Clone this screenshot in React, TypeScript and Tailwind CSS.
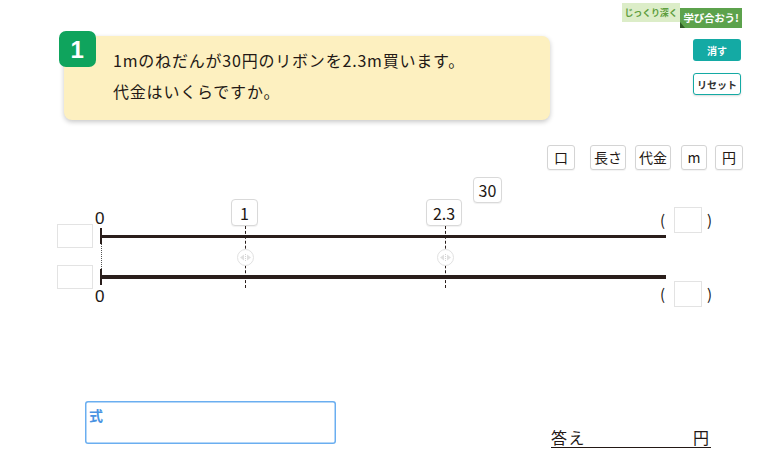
import React from "react";

const jp = { fontFamily: '"Noto Sans CJK JP", "Noto Sans", sans-serif' };

const LabelBox = ({ children, className }: { children: React.ReactNode; className: string }) => (
    <div
        className={`absolute flex items-center justify-center bg-white border border-[#d9d9d9] rounded-[4px] text-[16px] text-[#231815] shadow-[0_1px_1px_rgba(0,0,0,0.06)] ${className}`}
    >
        {children}
    </div>
);

const ToolBox = ({ children, w }: { children: React.ReactNode; w: string }) => (
    <div
        className={`h-[25px] ${w} flex items-center justify-center border border-[#d4d4d4] rounded-[3px] bg-white text-[14px] text-[#231815] shadow-[0_1px_1px_rgba(0,0,0,0.05)]`}
    >
        {children}
    </div>
);

export default function App() {
    return (
        <div className="w-[768px] h-[476px] bg-white overflow-hidden text-[#231815]" style={jp}>
            {/* Header: question card + right controls */}
            <div className="flex h-[145px]">
                <div className="pl-[64px] pt-[36px]">
                    <div className="relative w-[486px] h-[84px] bg-[#fdf0c0] rounded-[8px] shadow-[0_2px_5px_rgba(0,0,0,0.22)] pl-[49px] pt-[9px] text-[16px] leading-[31px] tracking-[0.05em]">
                        <div className="absolute -left-[5px] -top-[5px] w-[37px] h-[36px] rounded-[7px] bg-[#0fa45d] flex items-center justify-center text-white text-[24px] font-bold" style={{ fontFamily: '"Liberation Sans", Arial, sans-serif' }}>
                            1
                        </div>
                        <p>1mのねだんが30円のリボンを2.3m買います。</p>
                        <p>代金はいくらですか。</p>
                    </div>
                </div>

                <div className="ml-auto mr-[26px] pt-[3px] flex flex-col items-end">
                    <div className="flex items-start w-[120px]">
                        <div className="w-[58px] h-[19px] bg-[#dcedc8] text-[#5e9e3e] text-[9px] font-bold tracking-[-0.02em] whitespace-nowrap flex items-center justify-center">
                            じっくり深く
                        </div>
                        <div className="relative mt-[5px] w-[62px] h-[20px] bg-[#5ca24c] text-white text-[10.5px] font-bold tracking-[-0.02em] whitespace-nowrap flex items-center justify-center">
                            学び合おう!
                            <div className="absolute left-0 bottom-0 w-0 h-0 border-l-[5px] border-l-[#2e5b24] border-t-[6px] border-t-transparent" />
                        </div>
                    </div>
                    <button className="mt-[11px] mr-[1px] w-[48px] h-[22px] rounded-[3px] bg-[#14aaa4] text-white text-[10px] font-bold flex items-center justify-center">
                        消す
                    </button>
                    <button className="mt-[12px] mr-[1px] w-[48px] h-[22px] rounded-[3px] border-[1.5px] border-[#14aaa4] bg-white text-[#333] text-[10px] font-bold whitespace-nowrap flex items-center justify-center shadow-[0_1px_2px_rgba(0,0,0,0.15)]">
                        リセット
                    </button>
                </div>
            </div>

            {/* Toolbar */}
            <div className="flex justify-end items-center pr-[25px] h-[25px]">
                <ToolBox w="w-[28px]">口</ToolBox>
                <div className="w-[15px]" />
                <ToolBox w="w-[36px]">長さ</ToolBox>
                <div className="w-[9px]" />
                <ToolBox w="w-[36px]">代金</ToolBox>
                <div className="w-[10px]" />
                <ToolBox w="w-[26px]">m</ToolBox>
                <div className="w-[8px]" />
                <ToolBox w="w-[28px]">円</ToolBox>
            </div>

            {/* Number line diagram */}
            <div className="relative h-[140px]">
                <LabelBox className="left-[473px] top-[7px] w-[29px] h-[26px]">30</LabelBox>
                <LabelBox className="left-[231px] top-[29px] w-[27px] h-[27px]">1</LabelBox>
                <LabelBox className="left-[426px] top-[29px] w-[36px] h-[27px]">2.3</LabelBox>

                {/* zero labels */}
                <div className="absolute left-[95px] top-[40px] text-[17px] leading-none" style={{ fontFamily: '"Liberation Sans", Arial, sans-serif' }}>0</div>
                <div className="absolute left-[95px] top-[118px] text-[17px] leading-none" style={{ fontFamily: '"Liberation Sans", Arial, sans-serif' }}>0</div>

                {/* input boxes left */}
                <div className="absolute left-[57px] top-[54px] w-[36px] h-[24px] border border-[#e3e3e3] bg-white" />
                <div className="absolute left-[57px] top-[95px] w-[36px] h-[24px] border border-[#e3e3e3] bg-white" />

                {/* lines */}
                <div className="absolute left-[101px] top-[65px] w-[565px] h-[3px] bg-[#2a1e1b]" />
                <div className="absolute left-[101px] top-[105px] w-[565px] h-[4px] bg-[#2a1e1b]" />
                <div className="absolute left-[100px] top-[58px] w-[2px] h-[16px] bg-[#2a1e1b]" />
                <div className="absolute left-[100px] top-[99px] w-[2px] h-[16px] bg-[#2a1e1b]" />
                <div className="absolute left-[101px] top-[74px] h-[25px] border-l border-dotted border-[#555]" />

                {/* tick markers */}
                {[245, 445].map((x) => (
                    <React.Fragment key={x}>
                        <div className="absolute top-[56px] h-[62px] border-l border-dashed border-[#2a1e1b]" style={{ left: x }} />
                        <div
                            className="absolute top-[79px] w-[17px] h-[17px] rounded-full border border-[#e2e2e2] bg-white flex items-center justify-center"
                            style={{ left: x - 8 }}
                        >
                            <svg width="11" height="7" viewBox="0 0 11 7">
                                <path d="M0 3.5 L4 0.5 L4 6.5 Z" fill="#e0e0e0" />
                                <path d="M11 3.5 L7 0.5 L7 6.5 Z" fill="#e0e0e0" />
                                <line x1="5.5" y1="0" x2="5.5" y2="7" stroke="#c8c8c8" strokeWidth="0.8" strokeDasharray="1 1" />
                            </svg>
                        </div>
                    </React.Fragment>
                ))}

                {/* right unit boxes */}
                {[37, 111].map((t) => (
                    <div key={t} className="absolute left-[660px] flex items-center text-[15px]" style={{ top: t }}>
                        <span className="w-[14px]">(</span>
                        <div className="w-[28px] h-[26px] border border-[#e3e3e3] bg-white" />
                        <span className="ml-[5px]">)</span>
                    </div>
                ))}
            </div>

            {/* Bottom: expression and answer */}
            <div className="flex items-start pl-[85px] pt-[91px]">
                <div className="w-[251px] h-[43px] rounded-[3px] px-[4px] pt-[1px] ring-[1.5px] ring-inset ring-[#6aaef0]">
                    <span className="text-[#4a93e2] text-[14px] font-bold leading-none">式</span>
                </div>
                <div className="ml-[215px] mt-[26px] w-[160px] h-[21px] border-b border-[#231815] flex items-end justify-between text-[16px] leading-none pb-[2px]">
                    <span className="tracking-[0.1em]">答え</span>
                    <span className="mr-[2px]">円</span>
                </div>
            </div>
        </div>
    );
}
